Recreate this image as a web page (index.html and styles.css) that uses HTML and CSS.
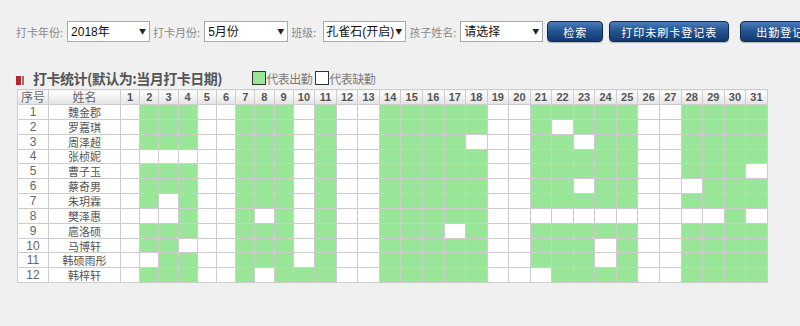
FILE: index.html
```html
<!DOCTYPE html>
<html lang="zh-CN">
<head>
    <meta charset="UTF-8">
    <meta name="viewport" content="width=device-width, initial-scale=1.0">
    <title>打卡统计</title>
    <link rel="stylesheet" href="styles.css">
</head>
<body>
    <div class="toolbar">
        <span class="label">打卡年份:</span>
        <span class="select sel-year"><select><option>2018年</option></select></span>
        <span class="label">打卡月份:</span>
        <span class="select sel-month"><select><option>5月份</option></select></span>
        <span class="label lb-class">班级:</span>
        <span class="select sel-class"><select><option>孔雀石(开启)</option></select></span>
        <span class="label">孩子姓名:</span>
        <span class="select sel-child"><select><option>请选择</option></select></span>
        <button class="btn btn-search">检索</button>
        <button class="btn btn-print">打印未刷卡登记表</button>
        <button class="btn btn-reg">出勤登记表</button>
    </div>

    <div class="stat-head">
        <span class="mark"><i class="mark-red"></i><i class="mark-grey"></i></span>
        <h3 class="stat-title">打卡统计(默认为:当月打卡日期)</h3>
        <span class="legend">
            <i class="box on"></i>代表出勤<i class="box"></i>代表缺勤
        </span>
    </div>

    <table class="stat-table">
        <thead>
            <tr id="head-row">
                <th class="cn col-no">序号</th>
                <th class="cn col-name">姓名</th>
            </tr>
        </thead>
        <tbody id="stat-body"></tbody>
    </table>

    <script>
        // 出勤数据：每个字符代表一天，1=出勤 0=缺勤
        var students = [
            ['魏金郡', '0111001110100111110011111001111'],
            ['罗嘉琪', '0111001110100111110010111001111'],
            ['周泽超', '0111001110100111100011011001111'],
            ['张桢妮', '0000001110100111110011111001111'],
            ['曹子玉', '0111001110100111110011111001110'],
            ['蔡奇男', '0111001110100111110011011000111'],
            ['朱玥霖', '0101001110100111110011111001111'],
            ['樊泽惠', '0001001010100111110000000000010'],
            ['扈洛硕', '0111001110100111010011111001111'],
            ['马博轩', '0110001110100111110011101001111'],
            ['韩硕雨彤', '0011001110100111110011101001111'],
            ['韩梓轩', '0111001011100111110001111001111']
        ];

        var headRow = document.getElementById('head-row');
        for (var d = 1; d <= 31; d++) {
            var th = document.createElement('th');
            th.className = d < 10 ? 'day-s' : 'day';
            th.textContent = d;
            headRow.appendChild(th);
        }

        var body = document.getElementById('stat-body');
        students.forEach(function (s, i) {
            var tr = document.createElement('tr');
            var html = '<td class="no">' + (i + 1) + '</td><td class="name">' + s[0] + '</td>';
            for (var j = 0; j < s[1].length; j++) {
                html += s[1].charAt(j) === '1' ? '<td class="on"></td>' : '<td></td>';
            }
            tr.innerHTML = html;
            body.appendChild(tr);
        });
    </script>
</body>
</html>
```

FILE: styles.css
```css
* {
    box-sizing: border-box;
    margin: 0;
    padding: 0;
}

body {
    font-family: "Noto Sans CJK SC", sans-serif;
    font-size: 12px;
    color: #666;
    background-color: #f0f0f0;
    padding: 21px 0 0 16px;
    overflow: hidden;
}

/* 顶部搜索栏 */
.toolbar {
    display: flex;
    align-items: center;
    height: 21px;
    white-space: nowrap;
}

.label {
    font-size: 11px;
    color: #8a8a8a;
    margin-right: 4px;
}

.lb-class {
    margin-right: 7px;
}

.select {
    position: relative;
    display: inline-block;
    margin-right: 3px;
}

.select select {
    appearance: none;
    -webkit-appearance: none;
    display: block;
    height: 21px;
    border: 1px solid #a9a9a9;
    background: #fff;
    font: 12px "Liberation Sans", "Noto Sans CJK SC", sans-serif;
    color: #111;
    padding: 0 8px 0 3px;
}

.select::after {
    content: "\25BC";
    position: absolute;
    right: 4px;
    top: 6px;
    font-size: 7px;
    line-height: 8px;
    color: #222;
    pointer-events: none;
}

.sel-year select { width: 83px; }
.sel-month select { width: 84px; }
.sel-class select { width: 83px; padding-left: 2px; }
.sel-child select { width: 83px; }

.btn {
    height: 21px;
    border: 1px solid #0e2b55;
    border-radius: 4px;
    background: linear-gradient(#4b7dbb, #255593 45%, #133a6e);
    box-shadow: 0 1px 1px rgba(0,0,0,0.25);
    color: #fff;
    font: 11px "Noto Sans CJK SC", sans-serif;
    letter-spacing: 1px;
    flex-shrink: 0;
}

.btn-search { width: 56px; margin-left: 1px; }
.btn-print { width: 120px; margin-left: 6px; }
.btn-reg { width: 94px; margin-left: 11px; text-align: left; padding-left: 15px; }

/* 统计标题 */
.stat-head {
    display: flex;
    align-items: flex-end;
    height: 20px;
    margin-top: 26px;
}

.mark {
    display: flex;
    margin-bottom: 3px;
    margin-right: 9px;
}

.mark i {
    display: block;
    height: 9px;
}

.mark-red {
    width: 5px;
    background: #b3282d;
}

.mark-grey {
    width: 2px;
    margin-left: 1px;
    background: #7a7a7a;
}

.stat-title {
    font-size: 14px;
    font-weight: bold;
    color: #555;
    line-height: 20px;
    letter-spacing: -0.5px;
}

.legend {
    display: flex;
    align-items: flex-end;
    margin-left: 30px;
    margin-bottom: 3px;
    font-size: 12px;
    line-height: 13px;
    color: #7a7a7a;
    letter-spacing: -0.5px;
}

.box {
    display: block;
    width: 14px;
    height: 14px;
    border: 1px solid #333;
    background: #fff;
}

.box.on {
    background: #99e699;
}

.legend .box:last-of-type {
    margin-left: 3px;
}

/* 统计表格 */
.stat-table {
    border-collapse: collapse;
    table-layout: fixed;
    width: 750px;
    margin-top: 1px;
    margin-left: 1px;
    background: #fff;
}

.stat-table thead tr {
    height: 15px;
}

.stat-table tbody tr {
    height: 14.85px;
}

.stat-table th,
.stat-table td {
    border: 1px solid #cdcdcd;
    padding: 0;
    text-align: center;
    line-height: 10px;
    overflow: hidden;
}

.stat-table th {
    background: linear-gradient(#ffffff, #e3e3e3);
    font: bold 11px "Liberation Sans", sans-serif;
    line-height: 10px;
    color: #555;
}

.stat-table th.cn {
    font: 12px "Noto Sans CJK SC", sans-serif;
    line-height: 10px;
    color: #666;
}

.col-no { width: 31px; }
.col-name { width: 72px; }
.day-s { width: 19.2px; }
.day { width: 21.55px; }

.stat-table td.no {
    font: 12px "Liberation Sans", sans-serif;
    line-height: 10px;
    color: #666;
}

.stat-table td.name {
    font-size: 11px;
    color: #555;
}

.stat-table td.on {
    background: #99e699;
}
```
